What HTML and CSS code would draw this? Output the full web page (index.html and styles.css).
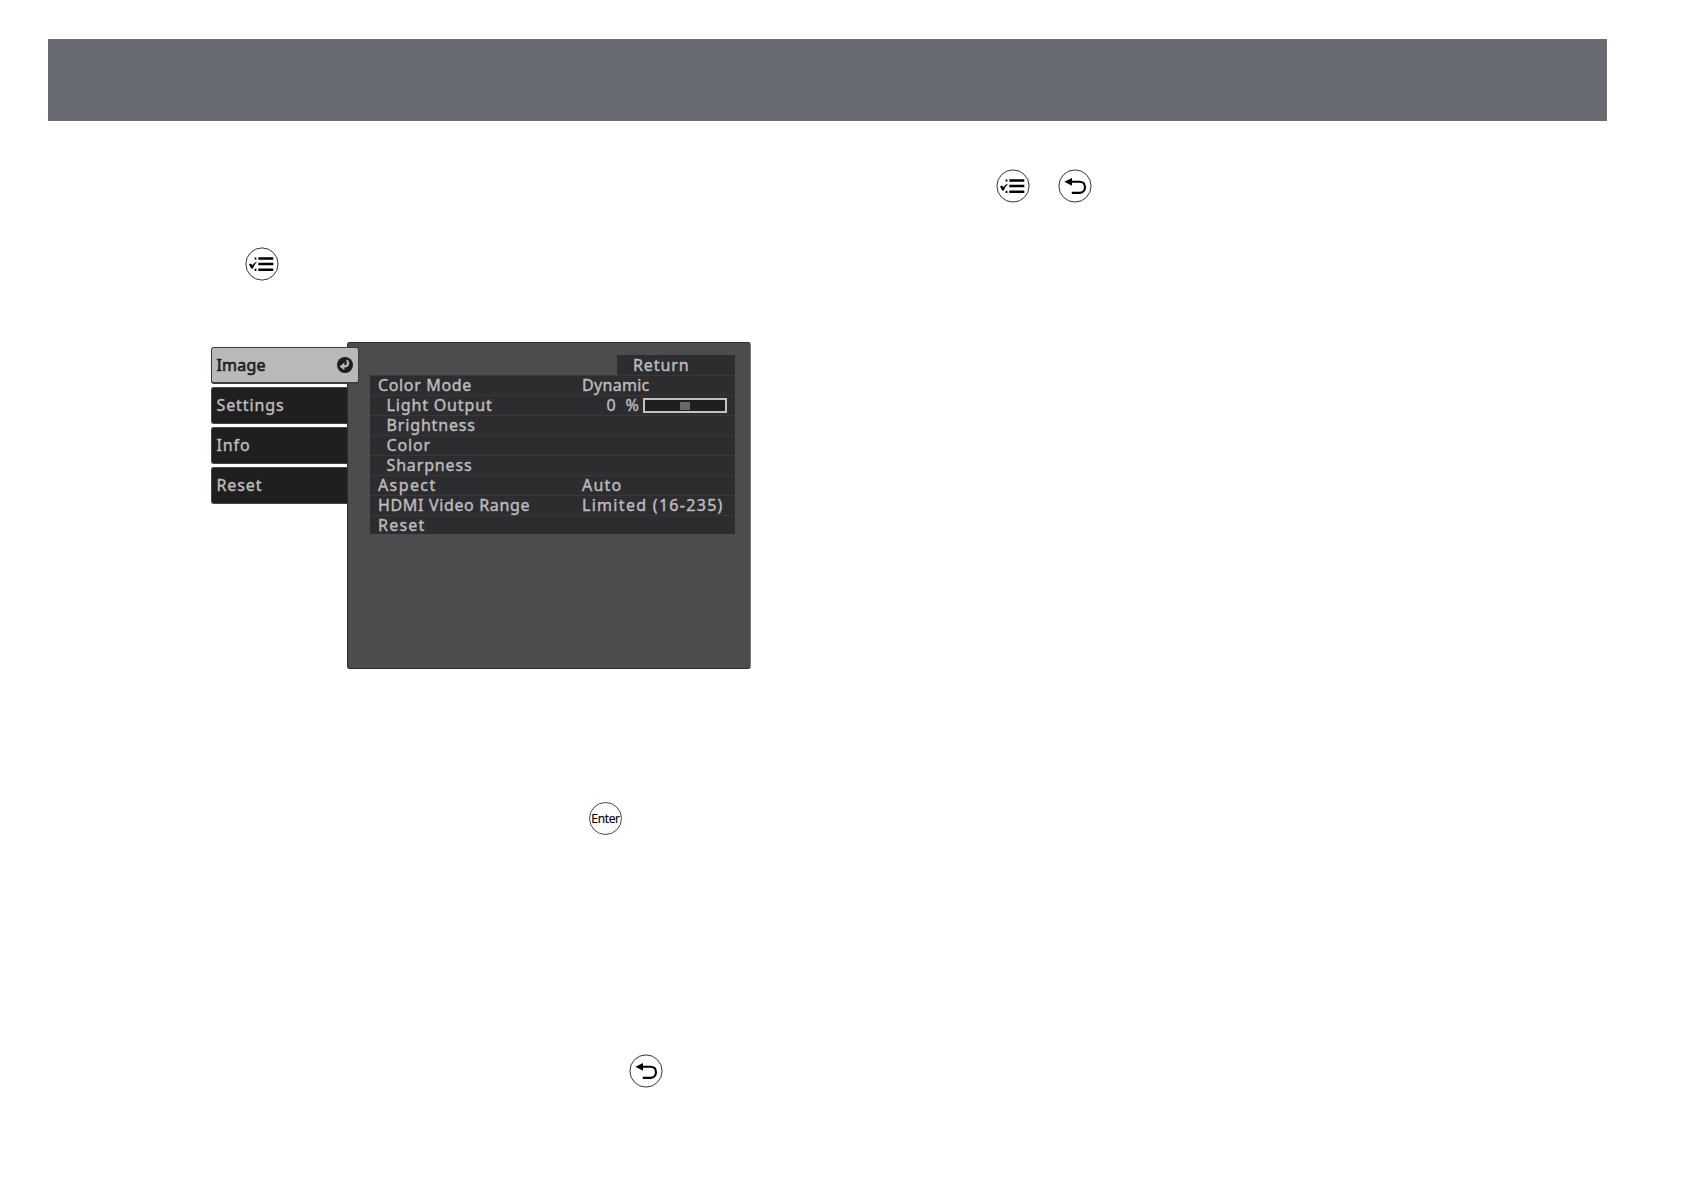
FILE: index.html
```html
<!DOCTYPE html>
<html>
<head>
  <meta charset="utf-8">
  <title>Using the Projector's Menus</title>
  <link rel="stylesheet" href="styles.css">
</head>
<body>
  <svg class="defs" width="0" height="0">
    <symbol id="menuIcon" viewBox="0 0 34 34">
      <circle cx="17" cy="17" r="16.1" fill="#fff" stroke="#333" stroke-width="1"/>
      <path d="M13.3 11.5H28.3M13.3 17H28.3M13.3 22.8H28.3" stroke="#000" stroke-width="2.4"/>
      <path d="M9.6 11.5h1.8M9.6 22.8h1.8" stroke="#000" stroke-width="2.2"/>
      <path d="M4 17.4l2-1 1.4 1.8q2-3 4.8-3.4-2.6 2.4-4.4 6.6H6.2z" fill="#000"/>
    </symbol>
    <symbol id="returnIcon" viewBox="0 0 34 34">
      <circle cx="17" cy="17" r="16.1" fill="#fff" stroke="#333" stroke-width="1"/>
      <path d="M12 12.8h9.2c3.6 0 5.8 2.2 5.8 5.4s-2.2 5.7-5.8 5.7H13.8" fill="none" stroke="#000" stroke-width="2.1"/>
      <path d="M6.4 12.8l7.6-3.9v7.8z" fill="#000"/>
    </symbol>
  </svg>

  <div class="banner"></div>

  <div class="page">
    <div class="column left">
      <svg class="key menu-key"><use href="#menuIcon"/></svg>

      <div class="osd">
        <div class="tabs">
          <div class="tab active">
            <span class="image-label">Image</span>
            <svg class="enter-mark" viewBox="0 0 16 16">
              <circle cx="8" cy="8" r="8" fill="#1d1d1e"/>
              <path d="M10 3.2c2.2 3.6 1 6.2-3.2 6.2" fill="none" stroke="#b9b9b9" stroke-width="2.2"/>
              <path d="M2.6 9.4l4.8-3.8v7.6z" fill="#b9b9b9"/>
            </svg>
          </div>
          <div class="tab">Settings</div>
          <div class="tab">Info</div>
          <div class="tab">Reset</div>
        </div>
        <div class="panel">
          <div class="return">Return</div>
          <div class="rows">
            <div class="row"><span class="name">Color Mode</span><span class="mode">Dynamic</span></div>
            <div class="row">
              <span class="name sub">Light Output</span>
              <span class="level">0</span><span class="percent">%</span>
              <div class="slider"><div class="knob"></div></div>
            </div>
            <div class="row"><span class="name sub">Brightness</span></div>
            <div class="row"><span class="name sub">Color</span></div>
            <div class="row"><span class="name sub">Sharpness</span></div>
            <div class="row"><span class="name aspect">Aspect</span><span class="auto">Auto</span></div>
            <div class="row"><span class="name">HDMI Video Range</span><span class="range">Limited (16-235)</span></div>
            <div class="row"><span class="name reset">Reset</span></div>
          </div>
        </div>
      </div>

      <div class="key enter-key">Enter</div>
      <svg class="key back-key"><use href="#returnIcon"/></svg>
    </div>

    <div class="column right">
      <svg class="key"><use href="#menuIcon"/></svg>
      <svg class="key"><use href="#returnIcon"/></svg>
    </div>
  </div>
</body>
</html>
```

FILE: styles.css
```css
html, body {
  margin: 0;
  padding: 0;
  background: #fff;
  font-family: "Noto Sans", sans-serif;
}

body {
  height: 1190px;
  padding-top: 39px;
  box-sizing: border-box;
  overflow: hidden;
}

.defs {
  display: block;
}

.banner {
  height: 82px;
  margin: 0 77px 0 48px;
  background: #686b72;
}

.page {
  display: grid;
  grid-template-columns: 842px 1fr;
}

.column {
  display: flex;
}

.left {
  flex-direction: column;
  align-items: flex-start;
}

.right {
  padding: 48px 0 0 154px;
  gap: 28px;
}

.key {
  width: 34px;
  height: 34px;
  display: block;
}

.menu-key {
  margin: 126px 0 0 245px;
}

.enter-key {
  margin: 133px 0 0 589px;
  width: 33px;
  height: 33px;
  box-sizing: border-box;
  border: 1px solid #444;
  border-radius: 50%;
  font-family: "Open Sans", sans-serif;
  font-size: 12px;
  letter-spacing: -0.3px;
  line-height: 31px;
  color: #000;
  -webkit-text-stroke: 0.2px;
  display: flex;
  justify-content: center;
}

.back-key {
  margin: 219px 0 0 629px;
}

.osd {
  display: flex;
  margin: 61px 0 0 211px;
  font-size: 16px;
  letter-spacing: 0.9px;
  color: #bcbcbe;
  -webkit-text-stroke: 0.4px;
}

.tabs {
  display: flex;
  flex-direction: column;
  gap: 3px;
  width: 136px;
  padding-top: 5px;
}

.tab {
  height: 37px;
  box-sizing: border-box;
  padding-left: 4.5px;
  border: 1px solid #444547;
  border-right: none;
  border-radius: 3px 0 0 3px;
  background: #1f1f20;
  line-height: 35px;
}

/* the open tab overlaps the panel edge */
.active {
  position: relative;
  z-index: 1;
  display: flex;
  align-items: center;
  justify-content: space-between;
  width: 148px;
  padding-right: 5px;
  border: 1px solid #3c3d3f;
  border-bottom-width: 2px;
  border-radius: 3px;
  background: #b9b9b9;
  color: #1d1d1e;
}

.image-label {
  letter-spacing: 0.2px;
  -webkit-text-stroke: 0.6px;
}

.enter-mark {
  width: 16px;
  height: 16px;
}

.panel {
  width: 404px;
  height: 327px;
  box-sizing: border-box;
  padding: 12px 15px 0 22px;
  border: 1px solid #2c2d30;
  border-right-color: #77787a;
  border-radius: 3px;
  background: #4b4c4e;
  line-height: 20px;
}

.return {
  width: 118px;
  height: 20px;
  margin-left: auto;
  padding-left: 16px;
  box-sizing: border-box;
  background: #2d2d2f;
}

.rows {
  background: #2d2d2f;
  height: 159px;
}

.row {
  display: flex;
  height: 20px;
  padding-left: 8px;
  box-sizing: border-box;
  border-top: 1px solid #38383a;
  line-height: 19px;
  white-space: nowrap;
}

.name {
  width: 204px;
  letter-spacing: 0.65px;
}

.sub {
  box-sizing: border-box;
  padding-left: 8.5px;
  letter-spacing: 0.85px;
}

.aspect {
  letter-spacing: 1.4px;
}

.reset {
  letter-spacing: 1.2px;
}

.mode {
  letter-spacing: 0.3px;
}

.auto {
  letter-spacing: 1.2px;
}

.range {
  letter-spacing: 1.3px;
}

.level {
  margin-left: 24.5px;
  width: 19px;
}

.percent {
  width: 17.5px;
}

.slider {
  width: 84px;
  height: 15px;
  margin-top: 2px;
  box-sizing: border-box;
  border: 2px solid #c2c2c4;
  background: #1f1f20;
}

.knob {
  width: 10px;
  height: 8px;
  margin: 2px auto 0;
  background: #69696c;
}
```
